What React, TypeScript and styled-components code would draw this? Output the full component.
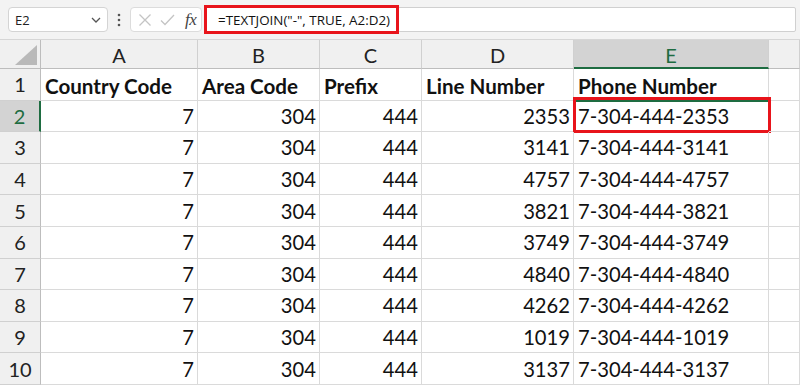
import React from 'react';
import styled, { createGlobalStyle } from 'styled-components';

const GREEN = '#1e6c41';
const RED = '#e8141b';

const GlobalStyle = createGlobalStyle`
  html, body {
    margin: 0;
    padding: 0;
    background: #ffffff;
  }
  body {
    font-family: Lato, "Open Sans", sans-serif;
  }
`;

const Page = styled.div`
  width: 800px;
  height: 387px;
  overflow: hidden;
  background: #ffffff;
`;

// --- Formula bar ---

const Toolbar = styled.div`
  display: flex;
  align-items: flex-start;
  height: 40px;
  box-sizing: border-box;
  padding: 7px 4px 0 8px;
  background: #f3f3f3;
  border-bottom: 1px solid #d6d6d6;
`;

const NameBox = styled.div`
  display: flex;
  align-items: center;
  justify-content: space-between;
  box-sizing: border-box;
  width: 100px;
  height: 25px;
  padding: 0 6px 0 6px;
  background: #ffffff;
  border: 1px solid #d4d4d4;
  border-radius: 4px;
  font-family: "Open Sans", sans-serif;
  font-size: 13px;
  color: #222;
`;

const Dots = styled.div`
  display: flex;
  align-items: center;
  justify-content: center;
  width: 22px;
  height: 25px;
`;

const Actions = styled.div`
  display: flex;
  align-items: center;
  gap: 8px;
  box-sizing: border-box;
  width: 72px;
  height: 25px;
  padding: 0 4px 0 7px;
  background: #ffffff;
  border: 1px solid #dcdcdc;
  border-radius: 4px;
`;

const Fx = styled.span`
  font-family: "Liberation Serif", serif;
  font-style: italic;
  font-size: 17px;
  color: #444;
  margin-left: 2px;
  letter-spacing: -0.5px;
`;

const FormulaInput = styled.div`
  position: relative;
  flex: 1;
  display: flex;
  align-items: center;
  box-sizing: border-box;
  height: 25px;
  margin-left: 3px;
  padding-left: 12px;
  background: #ffffff;
  border: 1px solid #d0d0d0;
  border-radius: 2px;
  font-family: "Open Sans", sans-serif;
  font-size: 13.4px;
  color: #111;
`;

const FormulaMark = styled.span`
  position: absolute;
  left: -2px;
  top: -3px;
  width: 195px;
  height: 29px;
  box-sizing: border-box;
  border: 3px solid ${RED};
`;

// --- Sheet grid ---

const Sheet = styled.div`
  display: grid;
  grid-template-columns: 41px 157px 122px 102px 152px 195px 1fr;
  grid-template-rows: 29px repeat(10, 31.6px);
`;

const Corner = styled.div`
  position: relative;
  background: #f0f0f0;
  border-right: 1px solid #bdbdbd;
  border-bottom: 1px solid #bdbdbd;
  box-sizing: border-box;
`;

const ColHeader = styled.div<{ $selected?: boolean }>`
  display: flex;
  align-items: center;
  justify-content: center;
  box-sizing: border-box;
  background: ${p => (p.$selected ? '#d3d3d3' : '#f0f0f0')};
  color: ${p => (p.$selected ? GREEN : '#222')};
  border-right: 1px solid #d0d0d0;
  border-bottom: ${p => (p.$selected ? `2px solid ${GREEN}` : '1px solid #bdbdbd')};
  font-size: 20px;
  padding-top: 2px;
`;

const RowHeader = styled.div<{ $selected?: boolean }>`
  display: flex;
  align-items: center;
  justify-content: center;
  box-sizing: border-box;
  background: ${p => (p.$selected ? '#d3d3d3' : '#f0f0f0')};
  color: ${p => (p.$selected ? GREEN : '#222')};
  border-right: ${p => (p.$selected ? `2px solid ${GREEN}` : '1px solid #bdbdbd')};
  border-bottom: 1px solid #d0d0d0;
  font-size: 20px;
`;

const Cell = styled.div<{ $num?: boolean; $bold?: boolean }>`
  position: relative;
  display: flex;
  align-items: center;
  justify-content: ${p => (p.$num ? 'flex-end' : 'flex-start')};
  box-sizing: border-box;
  padding: ${p => (p.$bold ? '3px 3px 0 4px' : '0 3px 0 4px')};
  border-right: 1px solid #dadada;
  border-bottom: 1px solid #dadada;
  font-size: ${p => (p.$bold ? '20.6px' : '20.2px')};
  font-weight: ${p => (p.$bold ? 700 : 400)};
  color: #111;
  white-space: nowrap;
`;

const ActiveCell = styled.span`
  position: absolute;
  left: -1px;
  top: -4px;
  right: -3px;
  bottom: -2px;
  border: 3px solid ${RED};
  box-shadow: inset 0 2px 0 ${GREEN};
`;

const Xicon = () => (
  <svg width="14" height="14" viewBox="0 0 14 14">
    <path d="M1.5 1.5 L12.5 12.5 M12.5 1.5 L1.5 12.5" stroke="#c4c4c4" strokeWidth="1.3" fill="none" />
  </svg>
);

const CheckIcon = () => (
  <svg width="15" height="14" viewBox="0 0 15 14">
    <path d="M1 7.5 L5 11.5 L14 2" stroke="#c4c4c4" strokeWidth="1.3" fill="none" />
  </svg>
);

const Chevron = () => (
  <svg width="10" height="6" viewBox="0 0 10 6">
    <path d="M1 1 L5 5 L9 1" stroke="#555" strokeWidth="1.3" fill="none" />
  </svg>
);

const VDots = () => (
  <svg width="4" height="14" viewBox="0 0 4 14">
    <circle cx="2" cy="2" r="1.3" fill="#555" />
    <circle cx="2" cy="7" r="1.3" fill="#555" />
    <circle cx="2" cy="12" r="1.3" fill="#555" />
  </svg>
);

const SelectAll = () => (
  <svg width="22" height="20" viewBox="0 0 22 20" style={{ position: 'absolute', right: 3, bottom: 3 }}>
    <polygon points="22,0 22,20 0,20" fill="#b9b9b9" />
  </svg>
);

const rows = [
  [7, 304, 444, 2353],
  [7, 304, 444, 3141],
  [7, 304, 444, 4757],
  [7, 304, 444, 3821],
  [7, 304, 444, 3749],
  [7, 304, 444, 4840],
  [7, 304, 444, 4262],
  [7, 304, 444, 1019],
  [7, 304, 444, 3137],
];

const headers = ['Country Code', 'Area Code', 'Prefix', 'Line Number', 'Phone Number'];

export default function App() {
  return (
    <Page>
      <GlobalStyle />
      <Toolbar>
        <NameBox>
          <span>E2</span>
          <Chevron />
        </NameBox>
        <Dots>
          <VDots />
        </Dots>
        <Actions>
          <Xicon />
          <CheckIcon />
          <Fx>fx</Fx>
        </Actions>
        <FormulaInput>
          <FormulaMark />
          =TEXTJOIN("-", TRUE, A2:D2)
        </FormulaInput>
      </Toolbar>

      <Sheet>
        <Corner>
          <SelectAll />
        </Corner>
        {['A', 'B', 'C', 'D', 'E', ''].map(c => (
          <ColHeader key={c} $selected={c === 'E'}>{c}</ColHeader>
        ))}

        <RowHeader>1</RowHeader>
        {headers.map(h => (
          <Cell key={h} $bold>{h}</Cell>
        ))}
        <Cell />

        {rows.map((r, i) => {
          const rowNum = i + 2;
          return (
            <React.Fragment key={rowNum}>
              <RowHeader $selected={rowNum === 2}>{rowNum}</RowHeader>
              {r.map((v, j) => (
                <Cell key={j} $num>{v}</Cell>
              ))}
              <Cell>
                {r.join('-')}
                {rowNum === 2 && <ActiveCell />}
              </Cell>
              <Cell />
            </React.Fragment>
          );
        })}
      </Sheet>
    </Page>
  );
}
